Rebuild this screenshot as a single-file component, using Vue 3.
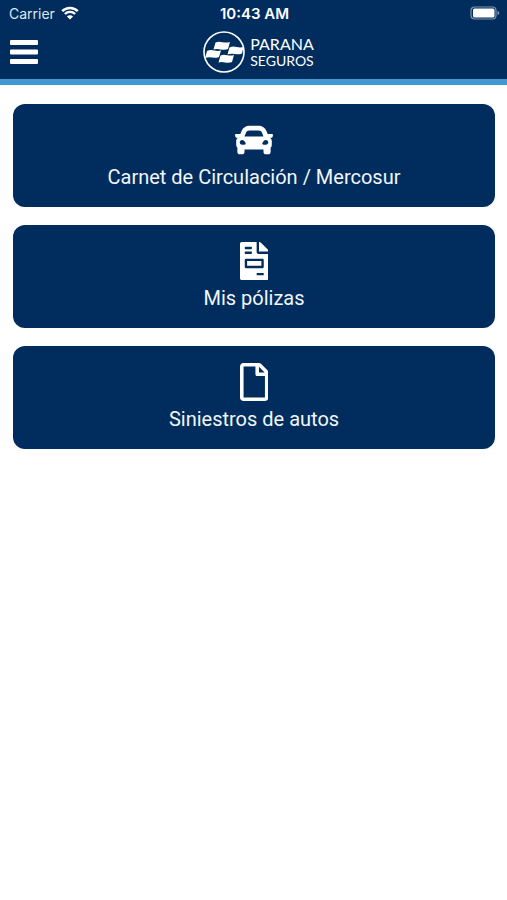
<template>
  <div class="app">
    <header class="header">
      <div class="status-bar">
        <div class="carrier">
          <span>Carrier</span>
          <svg class="wifi" viewBox="0 0 18 14" aria-hidden="true">
            <path d="M1.2 5.200a11 11 0 0 1 15.600 0" />
            <path d="M3.900 8a7.200 7.200 0 0 1 10.200 0" />
            <path class="dot" d="M9 13.600 5.900 10.500a4.400 4.400 0 0 1 6.200 0z" />
          </svg>
        </div>
        <span class="time">10:43 AM</span>
        <svg class="battery" viewBox="0 0 30 14" aria-hidden="true">
          <rect class="battery-case" x="1" y="1" width="25" height="12" rx="3.500" />
          <rect x="3" y="2.500" width="21.500" height="9" rx="1.500" fill="#fff" />
          <path d="M27.500 4.800c2.400 .8 2.400 3.600 0 4.400z" fill="#7f96ae" />
        </svg>
      </div>
      <div class="nav-bar">
        <button class="menu-button" type="button" aria-label="Menú">
          <svg viewBox="0 0 28 24" aria-hidden="true">
            <rect width="28" height="5" rx="1" />
            <rect y="9.500" width="28" height="5" rx="1" />
            <rect y="19" width="28" height="5" rx="1" />
          </svg>
        </button>
        <div class="logo">
          <svg class="logo-mark" viewBox="0 0 42 42" aria-hidden="true">
            <circle cx="21" cy="21" r="20" />
            <path d="M12.500 11.500c5 -2.500 8 1.500 14.500 -.5l-2 7c-5.500 2.200 -9 -1.500 -14.500 .5z" />
            <path d="M26.500 16.500c5 -2.500 8 1 14 -.5l-1.500 6.500c-5.500 2.200 -9 -1 -14.500 1z" />
            <path d="M4 20c5 -2.500 8 1 14 -.5l-2 6.500c-5.500 2.200 -8 -1 -14 1z" />
            <path d="M17.500 24.500c5 -2.500 8 1.500 13.500 -.5l-2 7c-5.500 2.200 -8.500 -1.500 -13.500 .5z" />
          </svg>
          <div class="logo-text">
            <span class="logo-name">PARANA</span>
            <span class="logo-sub">SEGUROS</span>
          </div>
        </div>
      </div>
    </header>

    <main class="menu">
      <button v-for="item in items" :key="item.label" class="card" type="button">
        <svg class="card-icon" :viewBox="item.viewBox" aria-hidden="true">
          <path :d="item.icon" />
        </svg>
        <span>{{ item.label }}</span>
      </button>
    </main>
  </div>
</template>

<script setup>
const items = [
  {
    label: 'Carnet de Circulación / Mercosur',
    viewBox: '0 0 512 512',
    icon: 'M499.99 176h-59.87l-16.64-41.6C406.38 91.63 365.57 64 319.5 64h-127c-46.06 0-86.88 27.63-103.99 70.4L71.87 176H12.01C4.2 176-1.53 183.34.37 190.91l6 24C7.7 220.25 12.5 224 18.01 224h20.07C24.65 235.73 16 252.78 16 272v48c0 16.12 6.16 30.67 16 41.93V416c0 17.67 14.33 32 32 32h32c17.67 0 32-14.33 32-32v-32h256v32c0 17.67 14.33 32 32 32h32c17.67 0 32-14.33 32-32v-54.07c9.84-11.25 16-25.8 16-41.93v-48c0-19.22-8.65-36.27-22.07-48H494c5.51 0 10.31-3.75 11.64-9.09l6-24c1.89-7.57-3.84-14.91-11.65-14.91zm-352.06-17.83c7.29-18.22 24.94-30.17 44.57-30.17h127c19.63 0 37.28 11.95 44.57 30.17L384 208H128l19.93-49.83zM96 319.8c-19.2 0-32-12.76-32-31.9S76.8 256 96 256s48 28.71 48 47.85-28.8 15.95-48 15.95zm320 0c-19.2 0-48 3.19-48-15.95S396.8 256 416 256s32 12.76 32 31.9-12.8 31.9-32 31.9z'
  },
  {
    label: 'Mis pólizas',
    viewBox: '0 0 384 512',
    icon: 'M288 256H96v64h192v-64zm89-151L279.1 7c-4.5-4.5-10.6-7-17-7H256v128h128v-6.1c0-6.3-2.5-12.4-7-16.9zm-153 31V0H24C10.7 0 0 10.7 0 24v464c0 13.3 10.7 24 24 24h336c13.3 0 24-10.7 24-24V160H248c-13.2 0-24-10.8-24-24zM64 72c0-4.42 3.58-8 8-8h80c4.42 0 8 3.58 8 8v16c0 4.42-3.58 8-8 8H72c-4.42 0-8-3.58-8-8V72zm0 64c0-4.42 3.58-8 8-8h80c4.42 0 8 3.58 8 8v16c0 4.42-3.58 8-8 8H72c-4.42 0-8-3.58-8-8v-16zm256 304c0 4.42-3.58 8-8 8h-80c-4.42 0-8-3.58-8-8v-16c0-4.42 3.58-8 8-8h80c4.42 0 8 3.58 8 8v16zm0-200v96c0 8.84-7.16 16-16 16H80c-8.84 0-16-7.16-16-16v-96c0-8.84 7.16-16 16-16h224c8.84 0 16 7.16 16 16z'
  },
  {
    label: 'Siniestros de autos',
    viewBox: '0 0 384 512',
    icon: 'M369.9 97.9L286 14C277 5 264.8-.1 252.1-.1H48C21.5 0 0 21.5 0 48v416c0 26.5 21.5 48 48 48h288c26.5 0 48-21.5 48-48V131.9c0-12.7-5.1-25-14.1-34zM332.1 128H256V51.9l76.1 76.1zM48 464V48h160v104c0 13.3 10.7 24 24 24h104v288H48z'
  }
]
</script>

<style>
body {
  margin: 0;
  background: #fff;
}
</style>

<style scoped>
.app {
  font-family: Inter, Roboto, "Liberation Sans", sans-serif;
  color: #fff;
}
.header {
  background: #002d5d;
  border-bottom: 6px solid #4296d2;
}
.status-bar {
  display: grid;
  grid-template-columns: 1fr auto 1fr;
  align-items: center;
  height: 26px;
  padding: 0 7px 0 9px;
  font-size: 14px;
}
.carrier {
  display: flex;
  align-items: center;
  gap: 6px;
  color: #dfe7ef;
}
.wifi {
  width: 18px;
  height: 14px;
  fill: none;
  stroke: #fff;
  stroke-width: 2.4;
}
.wifi .dot {
  fill: #fff;
  stroke: none;
}
.time {
  font-size: 15px;
  font-weight: 600;
}
.battery {
  justify-self: end;
  width: 30px;
  height: 14px;
}
.battery-case {
  fill: none;
  stroke: #7f96ae;
  stroke-width: 1.2;
}
.nav-bar {
  display: grid;
  grid-template-columns: 1fr auto 1fr;
  align-items: center;
  height: 51px;
  padding: 0 0 2px 10px;
}
.menu-button {
  justify-self: start;
  padding: 0;
  border: none;
  background: none;
  cursor: pointer;
}
.menu-button svg {
  display: block;
  width: 28px;
  height: 24px;
  fill: #fff;
}
.logo {
  display: flex;
  align-items: center;
  gap: 5px;
}
.logo-mark {
  width: 42px;
  height: 42px;
  fill: #fff;
}
.logo-mark circle {
  fill: none;
  stroke: #fff;
  stroke-width: 1.6;
}
.logo-text {
  display: flex;
  flex-direction: column;
  font-family: Lato, "Open Sans", sans-serif;
  line-height: 17px;
}
.logo-name {
  font-size: 16px;
}
.logo-sub {
  font-size: 14px;
}
.menu {
  display: flex;
  flex-direction: column;
  gap: 18px;
  padding: 19px 12px 18px 13px;
}
.card {
  display: flex;
  flex-direction: column;
  align-items: center;
  gap: 4px;
  padding: 17px 12px 16px;
  border: none;
  border-radius: 12px;
  background: #002d5d;
  color: #f2f6fa;
  font-family: Roboto, Inter, sans-serif;
  font-size: 20px;
  line-height: 28px;
  cursor: pointer;
}
.card-icon {
  height: 38px;
  fill: #fff;
}
</style>
